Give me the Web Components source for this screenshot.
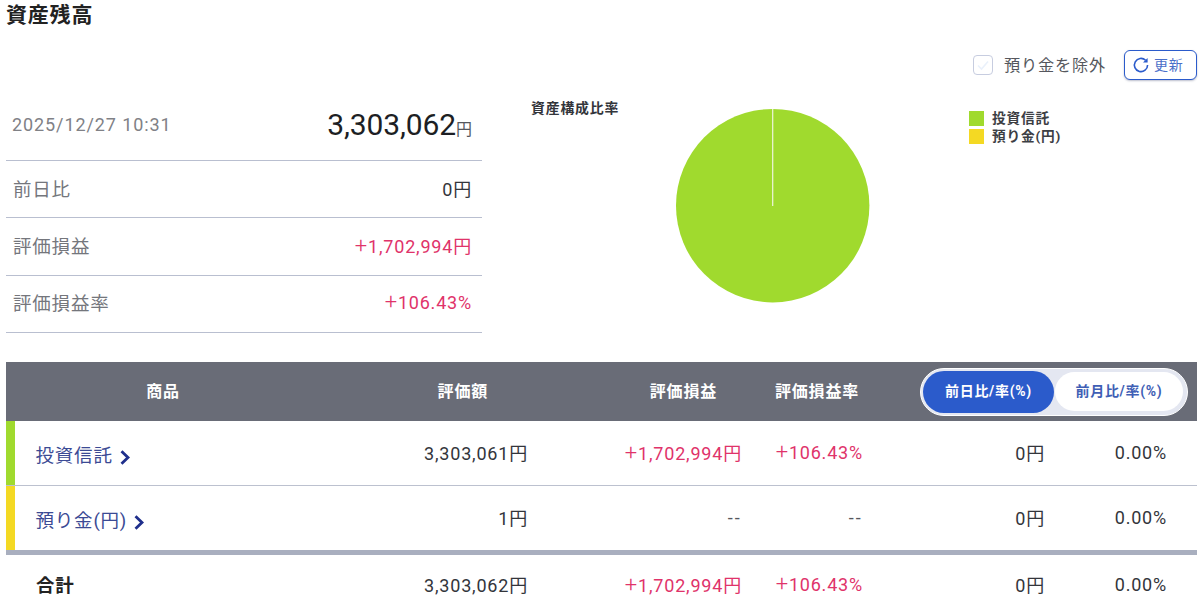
<!DOCTYPE html>
<html lang="ja">
<head>
<meta charset="utf-8">
<title>資産残高</title>
<style>
	html, body { margin: 0; padding: 0; background: #fff; overflow: hidden; }
	body { font-family: "Roboto", "Noto Sans CJK JP", sans-serif; letter-spacing: 0.05em; color: #222; height: 609px; }
</style>
</head>
<body>
<asset-page></asset-page>

<script>
'use strict';

/*
 * Summary
 */

const summaryRowTemplate = document.createElement('template');
summaryRowTemplate.innerHTML = `
	<style>
		:host {
			display: flex;
			justify-content: space-between;
			align-items: center;
			box-sizing: border-box;
			height: 57.4px;
			padding: 0 10px 3px 7px;
			border-bottom: 1px solid #b9bfd0;
			font-size: 18px;
			color: #33353b;
		}
		.label { color: #74767c; font-size: 18.5px; }
		:host([plus]) .value { color: #e0336a; }
	</style>
	<span class="label"><slot name="label"></slot></span>
	<span class="value"><slot></slot></span>
`;

class SummaryRowElement extends HTMLElement {
	constructor() {
		super();
		this.attachShadow({ mode: 'open' });
		this.shadowRoot.appendChild(summaryRowTemplate.content.cloneNode(true));
	}
}

const summaryTemplate = document.createElement('template');
summaryTemplate.innerHTML = `
	<style>
		:host {
			display: block;
			width: 476px;
		}
		.head {
			display: flex;
			justify-content: space-between;
			align-items: center;
			box-sizing: border-box;
			height: 73px;
			padding: 0 10px 0 6px;
			border-bottom: 1px solid #b9bfd0;
		}
		.date { font-size: 18px; letter-spacing: 0.9px; color: #808186; }
		.total { font-size: 30px; color: #1d1f24; letter-spacing: -0.1px; }
		.yen { font-size: 16px; color: #55575d; }
		.plus { font-size: 22px; font-weight: 300; line-height: 0; }
	</style>
	<div class="head">
		<span class="date">2025/12/27 10:31</span>
		<span class="total">3,303,062<span class="yen">円</span></span>
	</div>
	<d-summary-row><span slot="label">前日比</span>0円</d-summary-row>
	<d-summary-row plus><span slot="label">評価損益</span><span class="plus">+</span>1,702,994円</d-summary-row>
	<d-summary-row plus><span slot="label">評価損益率</span><span class="plus">+</span>106.43%</d-summary-row>
`;

class SummaryElement extends HTMLElement {
	constructor() {
		super();
		this.attachShadow({ mode: 'open' });
		this.shadowRoot.appendChild(summaryTemplate.content.cloneNode(true));
	}
}

/*
 * Chart
 */

const chartTemplate = document.createElement('template');
chartTemplate.innerHTML = `
	<style>
		:host {
			display: block;
			position: relative;
			width: 715px;
			height: 225px;
		}
		.caption {
			position: absolute;
			left: 49px;
			top: 9px;
			font-size: 13.9px;
			font-weight: 700;
			color: #33353b;
		}
		svg {
			position: absolute;
			left: 194px;
			top: 21px;
		}
		.legend {
			position: absolute;
			left: 487px;
			top: 21px;
			display: flex;
			flex-direction: column;
			font-size: 13.7px;
			font-weight: 700;
			line-height: 18px;
			color: #3c3e44;
		}
		.legend div { display: flex; align-items: center; gap: 8px; }
		.legend i { width: 15px; height: 15px; }
	</style>
	<div class="caption">資産構成比率</div>
	<svg width="194" height="194" viewBox="0 0 194 194">
		<circle cx="96.7" cy="96.7" r="96.7" fill="#a0da2e"></circle>
		<path d="M96.7 0V97" stroke="#eff6dd" stroke-width="1.2"></path>
	</svg>
	<div class="legend">
		<div><i style="background:#a0da2e"></i>投資信託</div>
		<div><i style="background:#f4d923"></i>預り金(円)</div>
	</div>
`;

class ChartElement extends HTMLElement {
	constructor() {
		super();
		this.attachShadow({ mode: 'open' });
		this.shadowRoot.appendChild(chartTemplate.content.cloneNode(true));
	}
}

/*
 * Controls
 */

const controlsTemplate = document.createElement('template');
controlsTemplate.innerHTML = `
	<style>
		:host {
			display: flex;
			justify-content: flex-end;
			align-items: center;
			box-sizing: border-box;
			height: 30px;
			font-size: 16.2px;
			color: #55575d;
		}
		.box {
			box-sizing: border-box;
			width: 20px;
			height: 20px;
			margin-right: 11px;
			border: 1px solid #c7cde0;
			border-radius: 4px;
			display: flex;
			align-items: center;
			justify-content: center;
		}
		.label { margin-top: -3px; }
		button {
			display: flex;
			align-items: center;
			gap: 4px;
			box-sizing: border-box;
			width: 73px;
			height: 30px;
			margin-left: 18px;
			padding: 0 0 3px 7px;
			border: 1px solid #2b5bcb;
			border-radius: 6px;
			background: #fff;
			box-shadow: 0 1px 2px rgba(60, 70, 110, 0.35);
			font-family: inherit;
			font-size: 14px;
			letter-spacing: 0.05em;
			color: #4a6fc9;
		}
		button svg { margin-top: 3px; }
	</style>
	<span class="box">
		<svg width="14" height="12" viewBox="0 0 14 12"><path d="M2 6.5 5.5 10 12 2.5" fill="none" stroke="#eaf1fb" stroke-width="1.6"></path></svg>
	</span>
	<span class="label">預り金を除外</span>
	<button type="button">
		<svg width="18" height="18" viewBox="0 0 18 18"><path d="M15.6 9a6.6 6.6 0 1 1-2-4.7" fill="none" stroke="#2b5bcb" stroke-width="1.6"></path><path d="M15.6 2v4.6H11z" fill="#2b5bcb"></path></svg>
		更新
	</button>
`;

class ControlsElement extends HTMLElement {
	constructor() {
		super();
		this.attachShadow({ mode: 'open' });
		this.shadowRoot.appendChild(controlsTemplate.content.cloneNode(true));
	}
}

/*
 * Holdings table
 */

const columns = 'grid-template-columns: 314px 220px 214px 121px 182px 122px 18px;';

const toggleTemplate = document.createElement('template');
toggleTemplate.innerHTML = `
	<style>
		:host {
			display: flex;
			box-sizing: border-box;
			width: 268px;
			height: 48px;
			padding: 2px 3px 2px 2px;
			border: 1px solid #fff;
			border-radius: 24px;
			background: #e4e7f1;
			font-size: 14px;
			letter-spacing: 0.05em;
			font-weight: 700;
		}
		span {
			display: flex;
			align-items: center;
			justify-content: center;
			box-sizing: border-box;
			padding-bottom: 3px;
			border-radius: 21px;
		}
		.on { width: 131px; background: #2b5bcb; color: #fff; }
		.off { flex: 1; margin: 1px 1px 2px 1px; background: #fff; color: #3f5fb5; }
	</style>
	<span class="on">前日比/率(%)</span>
	<span class="off">前月比/率(%)</span>
`;

class ToggleElement extends HTMLElement {
	constructor() {
		super();
		this.attachShadow({ mode: 'open' });
		this.shadowRoot.appendChild(toggleTemplate.content.cloneNode(true));
	}
}

const tableHeadTemplate = document.createElement('template');
tableHeadTemplate.innerHTML = `
	<style>
		:host {
			display: grid;
			${columns}
			align-items: center;
			height: 59px;
			background: #696c77;
			color: #fff;
			font-size: 16px;
			font-weight: 700;
		}
		div { margin-top: -3px; }
		.name { text-align: center; padding-right: 0; }
		.value { text-align: right; padding-right: 52px; }
		.gain { text-align: right; padding-right: 37px; }
		.rate { text-align: right; padding-right: 16px; }
		d-toggle { grid-column: 5 / 8; justify-self: end; margin-right: 9px; }
	</style>
	<div class="name">商品</div>
	<div class="value">評価額</div>
	<div class="gain">評価損益</div>
	<div class="rate">評価損益率</div>
	<d-toggle></d-toggle>
`;

class TableHeadElement extends HTMLElement {
	constructor() {
		super();
		this.attachShadow({ mode: 'open' });
		this.shadowRoot.appendChild(tableHeadTemplate.content.cloneNode(true));
	}
}

const tableRowTemplate = document.createElement('template');
tableRowTemplate.innerHTML = `
	<style>
		:host {
			display: grid;
			${columns}
			align-items: center;
			box-sizing: border-box;
			height: 65px;
			border-bottom: 1px solid #bcc1cf;
			font-size: 18px;
			color: #33353b;
		}
		:host([last]) { height: 69px; border-bottom: 5px solid #a9afbf; }
		:host([total]) { height: 60px; border-bottom: 0; }
		.name {
			display: flex;
			align-items: center;
			align-self: stretch;
			box-sizing: border-box;
			padding: 1px 0 0 20.5px;
			gap: 7px;
			border-left: 9px solid var(--swatch, transparent);
			font-size: 18.5px;
			color: #3b4a94;
		}
		:host([total]) .name { color: #222; font-weight: 700; padding: 0 0 2px 30px; border-left: 0; }
		.cell { text-align: right; padding-right: 12px; margin-top: -2px; }
		.gain { color: #e0336a; }
		svg { margin-top: 8px; }
		:host([total]) svg { display: none; }
	</style>
	<div class="name">
		<slot name="name"></slot>
		<svg width="11" height="15" viewBox="0 0 11 15"><path d="M1.5 1.2 8 7.5 1.5 13.8" fill="none" stroke="#1f2f8c" stroke-width="2.8"></path></svg>
	</div>
	<div class="cell"><slot name="value"></slot></div>
	<div class="cell gain"><slot name="gain"></slot></div>
	<div class="cell gain"><slot name="rate"></slot></div>
	<div class="cell"><slot name="day"></slot></div>
	<div class="cell"><slot name="dayrate"></slot></div>
`;

class TableRowElement extends HTMLElement {
	constructor() {
		super();
		this.attachShadow({ mode: 'open' });
		this.shadowRoot.appendChild(tableRowTemplate.content.cloneNode(true));
	}
}

const tableTemplate = document.createElement('template');
tableTemplate.innerHTML = `
	<style>
		:host { display: block; }
		.dash { color: #55575d; letter-spacing: 0.12em; }
		.plus { font-size: 22px; font-weight: 300; line-height: 0; }
	</style>
	<d-table-head></d-table-head>
	<d-table-row style="--swatch:#a0da2e">
		<span slot="name">投資信託</span>
		<span slot="value">3,303,061円</span>
		<span slot="gain"><span class="plus">+</span>1,702,994円</span>
		<span slot="rate"><span class="plus">+</span>106.43%</span>
		<span slot="day">0円</span>
		<span slot="dayrate">0.00%</span>
	</d-table-row>
	<d-table-row last style="--swatch:#f4d923">
		<span slot="name">預り金(円)</span>
		<span slot="value">1円</span>
		<span slot="gain" class="dash">--</span>
		<span slot="rate" class="dash">--</span>
		<span slot="day">0円</span>
		<span slot="dayrate">0.00%</span>
	</d-table-row>
	<d-table-row total>
		<span slot="name">合計</span>
		<span slot="value">3,303,062円</span>
		<span slot="gain"><span class="plus">+</span>1,702,994円</span>
		<span slot="rate"><span class="plus">+</span>106.43%</span>
		<span slot="day">0円</span>
		<span slot="dayrate">0.00%</span>
	</d-table-row>
`;

class TableElement extends HTMLElement {
	constructor() {
		super();
		this.attachShadow({ mode: 'open' });
		this.shadowRoot.appendChild(tableTemplate.content.cloneNode(true));
	}
}

/*
 * Page
 */

const pageTemplate = document.createElement('template');
pageTemplate.innerHTML = `
	<style>
		:host {
			display: block;
			box-sizing: border-box;
			width: 1200px;
			padding: 0 3px 0 6px;
		}
		h1 {
			margin: 0;
			height: 50px;
			font-size: 21px;
			line-height: 30px;
			font-weight: 700;
			color: #222;
		}
		.top { display: flex; margin-top: 8px; }
		.bottom { margin-top: 29px; }
	</style>
	<h1>資産残高</h1>
	<d-controls></d-controls>
	<div class="top">
		<d-summary></d-summary>
		<d-chart></d-chart>
	</div>
	<d-table class="bottom"></d-table>
`;

class PageElement extends HTMLElement {
	constructor() {
		super();
		this.attachShadow({ mode: 'open' });
		this.shadowRoot.appendChild(pageTemplate.content.cloneNode(true));
	}
}

// Definitions

window.customElements.define('d-summary-row', SummaryRowElement);
window.customElements.define('d-summary', SummaryElement);
window.customElements.define('d-chart', ChartElement);
window.customElements.define('d-controls', ControlsElement);
window.customElements.define('d-toggle', ToggleElement);
window.customElements.define('d-table-head', TableHeadElement);
window.customElements.define('d-table-row', TableRowElement);
window.customElements.define('d-table', TableElement);
window.customElements.define('asset-page', PageElement);
</script>
</body>
</html>
